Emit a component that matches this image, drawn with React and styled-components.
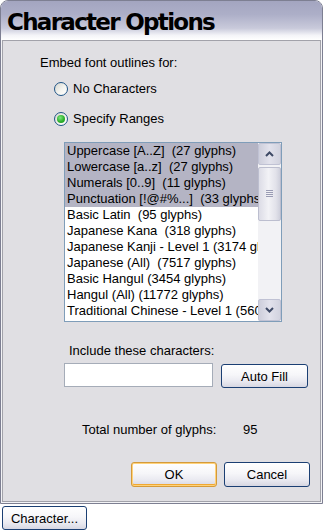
import React from 'react';
import styled, { createGlobalStyle } from 'styled-components';

const Global = createGlobalStyle`
  html, body { margin: 0; padding: 0; background: #ffffff; }
  body { font-family: "Liberation Sans", Arial, sans-serif; font-size: 13px; color: #000; }
`;

const Page = styled.div`
  width: 325px;
  height: 531px;
  display: flex;
  flex-direction: column;
  align-items: flex-start;
`;

const Dialog = styled.div`
  width: 323px;
  height: 504px;
  box-sizing: border-box;
  border: 1px solid #7d7f92;
  border-radius: 8px 8px 0 0;
  display: flex;
  flex-direction: column;
  overflow: hidden;
  background: #f3f3f6;
`;

const TitleBar = styled.div`
  height: 39px;
  flex: none;
  box-sizing: border-box;
  padding: 3px 0 0 6px;
  display: flex;
  align-items: center;
  background: linear-gradient(180deg, #a3a5c0 0%, #adafc8 35%, #c9cadb 70%, #f4f4f8 88%, #ffffff 100%);
  font-family: "DejaVu Sans", sans-serif;
  font-weight: bold;
  font-size: 23px;
  letter-spacing: -1.7px;
  color: #000;
`;

const Body = styled.div`
  flex: 1;
  margin: 0 1px 1px 1px;
  border: 1px solid #a2a2aa;
  background: #e0dfe3;
  display: flex;
  flex-direction: column;
  align-items: flex-start;
  padding: 14px 10px 0 37px;
`;

const Text = styled.div`
  line-height: 15px;
  white-space: nowrap;
  margin-left: ${p => p.$indent || 0}px;
  margin-top: ${p => p.$top || 0}px;
`;

const RadioGroup = styled.div`
  display: flex;
  flex-direction: column;
  gap: 14px;
  margin: 11px 0 0 14px;
`;

const RadioRow = styled.label`
  display: flex;
  align-items: center;
  gap: 5px;
  height: 16px;
  line-height: 16px;
`;

const RadioCircle = styled.span`
  width: 14px;
  height: 14px;
  box-sizing: border-box;
  border-radius: 50%;
  border: 1px solid #1f5487;
  background: linear-gradient(135deg, #d6d6ce 0%, #f4f4f0 55%, #ffffff 100%);
  display: flex;
  align-items: center;
  justify-content: center;
  &::after {
    content: '';
    width: 8px;
    height: 8px;
    border-radius: 50%;
    background: ${p => (p.$checked ? 'radial-gradient(circle at 40% 35%, #7de87d 0%, #2eb02e 55%, #1d911d 100%)' : 'transparent')};
  }
`;

const ListBox = styled.div`
  margin: 15px 0 0 24px;
  width: 218px;
  height: 180px;
  box-sizing: border-box;
  border: 1px solid #7f9db9;
  background: #ffffff;
  display: flex;
`;

const Items = styled.div`
  flex: 1;
  min-width: 0;
  overflow: hidden;
`;

const Item = styled.div`
  height: 16px;
  line-height: 16px;
  padding-left: 2px;
  white-space: pre;
  overflow: hidden;
  background: ${p => (p.$selected ? '#b4b4c4' : 'transparent')};
`;

const ScrollBar = styled.div`
  width: 23px;
  flex: none;
  display: flex;
  flex-direction: column;
  background: #f2f2f5;
`;

const ScrollButton = styled.div`
  height: 22px;
  flex: none;
  box-sizing: border-box;
  border: 1px solid #c0c2d4;
  border-radius: 2px;
  background: linear-gradient(90deg, #cdcedb 0%, #e2e2ec 50%, #d2d3df 100%);
  display: flex;
  align-items: center;
  justify-content: center;
`;

const Track = styled.div`
  flex: 1;
  display: flex;
  flex-direction: column;
  padding-top: 2px;
`;

const Thumb = styled.div`
  height: 54px;
  box-sizing: border-box;
  border: 1px solid #bcbecf;
  border-radius: 2px;
  background: linear-gradient(90deg, #dcdce6 0%, #f2f2f6 45%, #e2e2ea 80%, #cfd0dc 100%);
  display: flex;
  align-items: center;
  justify-content: center;
`;

const InputRow = styled.div`
  display: flex;
  align-items: flex-start;
  gap: 8px;
  margin: 5px 0 0 24px;
`;

const TextInput = styled.div`
  width: 149px;
  height: 24px;
  box-sizing: border-box;
  border: 1px solid #a5acb8;
  background: #ffffff;
`;

const Button = styled.button`
  width: ${p => p.$w}px;
  height: ${p => p.$h || 24}px;
  margin-top: ${p => p.$top || 0}px;
  box-sizing: border-box;
  border: 1px solid #1b3f73;
  border-radius: 3px;
  background: linear-gradient(180deg, #ffffff 0%, #f6f6f9 45%, #e9e9f0 75%, #d7d7e2 100%);
  font-family: "Liberation Sans", Arial, sans-serif;
  font-size: 13px;
  color: #000;
  padding: 0;
  box-shadow: ${p => (p.$default ? 'inset 0 0 0 1px #ffd27a, inset 0 -1px 0 1px #f0a832' : 'none')};
  ${p => (p.$default ? 'border-color: #d49a3a;' : '')}
`;

const TotalRow = styled.div`
  display: flex;
  line-height: 15px;
  margin: 34px 0 0 42px;
`;

const TotalLabel = styled.span`
  width: 161px;
`;

const ButtonRow = styled.div`
  align-self: flex-end;
  display: flex;
  gap: 7px;
  margin-top: 25px;
`;

const Footer = styled.div`
  margin: 2px 0 0 2px;
`;

const Chevron = ({ down }) => (
  <svg width="9" height="6" viewBox="0 0 9 6">
    <polyline
      points={down ? '1,1 4.5,4.5 8,1' : '1,5 4.5,1.5 8,5'}
      fill="none"
      stroke="#3e4a66"
      strokeWidth="2"
    />
  </svg>
);

const Grip = () => (
  <svg width="7" height="8" viewBox="0 0 7 8">
    {[0.5, 2.5, 4.5, 6.5].map(y => (
      <line key={y} x1="0" x2="7" y1={y} y2={y} stroke="#9a9cb4" strokeWidth="1" />
    ))}
  </svg>
);

const items = [
  ['Uppercase [A..Z]  (27 glyphs)', true],
  ['Lowercase [a..z]  (27 glyphs)', true],
  ['Numerals [0..9]  (11 glyphs)', true],
  ['Punctuation [!@#%...]  (33 glyphs)', true],
  ['Basic Latin  (95 glyphs)', false],
  ['Japanese Kana  (318 glyphs)', false],
  ['Japanese Kanji - Level 1 (3174 glyphs)', false],
  ['Japanese (All)  (7517 glyphs)', false],
  ['Basic Hangul (3454 glyphs)', false],
  ['Hangul (All) (11772 glyphs)', false],
  ['Traditional Chinese - Level 1 (5609 glyphs)', false],
];

export default function App() {
  return (
    <>
      <Global />
      <Page>
        <Dialog>
          <TitleBar>Character Options</TitleBar>
          <Body>
            <Text>Embed font outlines for:</Text>
            <RadioGroup>
              <RadioRow>
                <RadioCircle />
                No Characters
              </RadioRow>
              <RadioRow>
                <RadioCircle $checked />
                Specify Ranges
              </RadioRow>
            </RadioGroup>
            <ListBox>
              <Items>
                {items.map(([label, sel]) => (
                  <Item key={label} $selected={sel}>{label}</Item>
                ))}
              </Items>
              <ScrollBar>
                <ScrollButton><Chevron /></ScrollButton>
                <Track>
                  <Thumb><Grip /></Thumb>
                </Track>
                <ScrollButton><Chevron down /></ScrollButton>
              </ScrollBar>
            </ListBox>
            <Text $indent={29} $top={21}>Include these characters:</Text>
            <InputRow>
              <TextInput />
              <Button $w={87} $top={1}>Auto Fill</Button>
            </InputRow>
            <TotalRow>
              <TotalLabel>Total number of glyphs:</TotalLabel>
              <span>95</span>
            </TotalRow>
            <ButtonRow>
              <Button $w={86} $h={25} $default>OK</Button>
              <Button $w={86} $h={25}>Cancel</Button>
            </ButtonRow>
          </Body>
        </Dialog>
        <Footer>
          <Button $w={85}>Character...</Button>
        </Footer>
      </Page>
    </>
  );
}
